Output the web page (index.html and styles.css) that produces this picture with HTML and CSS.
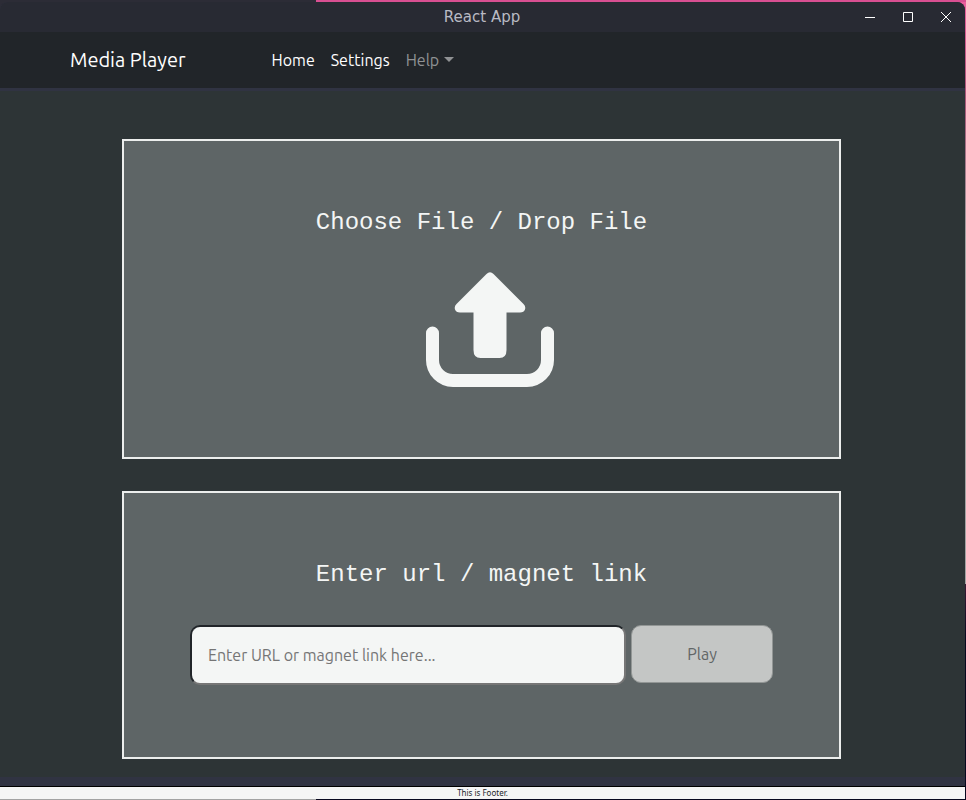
FILE: index.html
```html
<!DOCTYPE html>
<html lang="en">
<head>
<meta charset="utf-8">
<meta name="viewport" content="width=device-width, initial-scale=1">
<title>React App</title>
<link rel="stylesheet" href="styles.css">
</head>
<body>
<div class="window">
  <div class="titlebar">
    <span class="titlebar-title">React App</span>
    <div class="window-controls">
      <button type="button" aria-label="Minimize"><svg width="12" height="12" viewBox="0 0 12 12"><path d="M1 6.500h10"/></svg></button>
      <button type="button" aria-label="Maximize"><svg width="12" height="12" viewBox="0 0 12 12"><path d="M1.500 1.500h9v9h-9z"/></svg></button>
      <button type="button" aria-label="Close"><svg width="12" height="12" viewBox="0 0 12 12"><path d="M1 1l10 10M11 1L1 11"/></svg></button>
    </div>
  </div>
  <nav class="navbar">
    <a class="brand" href="#">Media Player</a>
    <div class="nav-links">
      <a href="#">Home</a>
      <a href="#">Settings</a>
      <a class="dropdown" href="#">Help</a>
    </div>
  </nav>
  <main class="content">
    <section class="card card-file">
      <h1>Choose File / Drop File</h1>
      <button class="upload" type="button" aria-label="Choose file">
        <svg width="128" height="116" viewBox="0 0 128 116">
          <path class="arrow" d="M60.500 3Q64-0.500 67.500 3L97.500 33Q100 35.500 99 38.500Q98 41.500 94 41.500H80.500V79Q80.500 87 73.500 87H54.500Q47.500 87 47.500 79V41.500H34Q30 41.500 29 38.500Q28 35.500 30.500 33Z"/>
          <path class="tray" d="M6.500 62V89A20.500 20.500 0 0 0 27 109.500H101A20.500 20.500 0 0 0 121.500 89V62"/>
        </svg>
      </button>
    </section>
    <section class="card card-url">
      <h2>Enter url / magnet link</h2>
      <form class="url-form">
        <input type="text" aria-label="URL or magnet link" placeholder="Enter URL or magnet link here...">
        <button type="button" disabled>Play</button>
      </form>
    </section>
  </main>
  <footer class="footer">This is Footer.</footer>
</div>
</body>
</html>
```
FILE: styles.css
```css
* {
  box-sizing: border-box;
}

body {
  margin: 0;
  min-height: 100vh;
  padding: 2px 1px 1px 0;
  display: flex;
  background:
    linear-gradient(#2c2c36, #2c2c36) top left / 316px 12px no-repeat,
    linear-gradient(#d94f92, #d94f92) top left / 100% 2px no-repeat,
    linear-gradient(#a3a3a3, #a3a3a3) bottom left / 316px 1px no-repeat,
    linear-gradient(#ec609f 0, #a95578 12%, #a3a3a3 30%, #a3a3a3 73%, #3a1a35 73%, #08081f 80%);
  font-family: Ubuntu, "Noto Sans", sans-serif;
  font-size: 16px;
}

.window {
  flex: 1;
  min-width: 0;
  display: flex;
  flex-direction: column;
  background: #303342;
  border-radius: 8px 8px 0 0;
  overflow: hidden;
}

.titlebar {
  height: 30px;
  display: grid;
  grid-template-columns: 1fr auto 1fr;
  align-items: center;
  padding: 0 13px 0 12px;
  background: #282a33;
  color: #b9bac4;
  font: 15px/20px "DejaVu Sans", sans-serif;
}

.titlebar-title {
  grid-column: 2;
}

.window-controls {
  display: flex;
  justify-content: flex-end;
  gap: 26px;
}

.window-controls button {
  display: flex;
  padding: 0;
  border: 0;
  background: none;
}

.window-controls svg {
  fill: none;
  stroke: #fff;
  stroke-width: 1;
}

.navbar {
  height: 56px;
  display: flex;
  align-items: center;
  gap: 86px;
  padding: 0 70px;
  background: #212529;
}

.navbar a {
  color: #fff;
  text-decoration: none;
}

.brand {
  font-size: 20px;
  line-height: 30px;
}

.nav-links {
  display: flex;
  gap: 16px;
  line-height: 24px;
}

.navbar .dropdown {
  display: flex;
  align-items: center;
  gap: 5px;
  color: #909294;
}

.dropdown::after {
  content: "";
  margin-bottom: 2px;
  border: 5px solid transparent;
  border-top-color: currentColor;
  border-bottom: 0;
}

.content {
  flex: 1;
  display: flex;
  flex-direction: column;
  gap: 32px;
  margin: 3px 0 9px;
  padding: 48px 124px 18px 122px;
  background: #2d3436;
}

.card {
  display: flex;
  flex-direction: column;
  align-items: center;
  padding: 66px 64px 70px;
  border: 2px solid #eceeed;
  background: #5e6566;
}

.card-file {
  gap: 32px;
}

.card-url {
  gap: 34px;
  padding-bottom: 72px;
}

.card h1,
.card h2 {
  margin: 0;
  color: #f4f6f5;
  font: 24px/32px "Liberation Mono", monospace;
}

.upload {
  display: flex;
  margin-left: 17px;
  padding: 0;
  border: 0;
  background: none;
}

.arrow {
  fill: #f4f6f5;
}

.tray {
  fill: none;
  stroke: #f4f6f5;
  stroke-width: 13;
  stroke-linecap: round;
}

.url-form {
  display: flex;
  align-items: flex-start;
  gap: 5px;
  width: 100%;
  padding: 0 2px;
}

.url-form input {
  flex: 1;
  min-width: 0;
  height: 60px;
  padding: 0 16px;
  border: 2px solid #767676;
  border-color: #212529 #767676 #767676 #212529;
  border-radius: 10px;
  background: #f4f6f5;
  font: inherit;
}

.url-form input::placeholder {
  color: #757575;
}

.url-form button {
  width: 142px;
  height: 58px;
  border: 1px solid #929695;
  border-radius: 10px;
  background: #c4c6c5;
  color: #616566;
  font: inherit;
}

.footer {
  border-top: 1px solid #000;
  background: #f5f5f5;
  color: #212529;
  font: 8px/12px "Noto Sans", sans-serif;
  text-align: center;
}
```
